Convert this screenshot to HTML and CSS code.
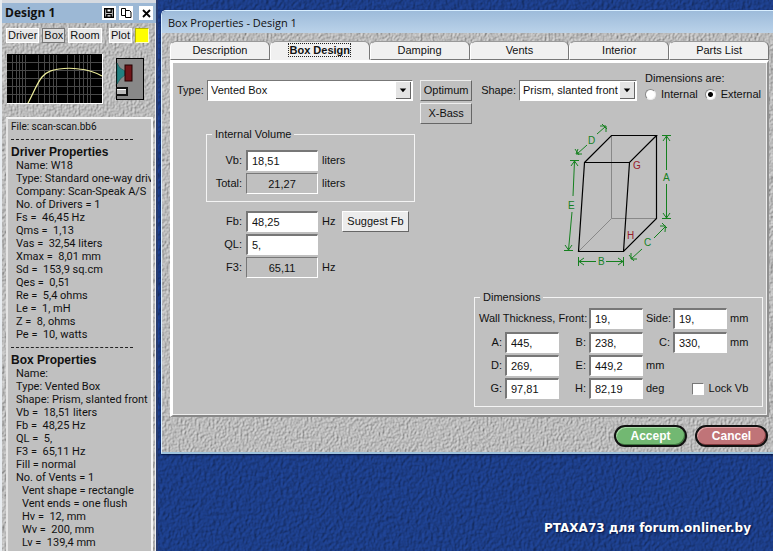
FILE: index.html
```html
<!DOCTYPE html>
<html lang="en">
<head>
<meta charset="utf-8">
<title>Box Properties - Design 1</title>
<link rel="stylesheet" href="styles.css">
</head>
<body>
<svg class="defs" aria-hidden="true">
  <filter id="stone" x="0" y="0" width="100%" height="100%" color-interpolation-filters="sRGB">
    <feTurbulence type="fractalNoise" baseFrequency="0.5 0.4" numOctaves="2" seed="4"/>
    <feDiffuseLighting lighting-color="#d2d2d2" surfaceScale="0.9" diffuseConstant="1.05"><feDistantLight azimuth="215" elevation="58"/></feDiffuseLighting>
  </filter>
  <filter id="water" x="0" y="0" width="100%" height="100%" color-interpolation-filters="sRGB">
    <feTurbulence type="fractalNoise" baseFrequency="0.34 0.28" numOctaves="2" seed="8"/>
    <feDiffuseLighting lighting-color="#1f4394" surfaceScale="0.9" diffuseConstant="1.08"><feDistantLight azimuth="215" elevation="58"/></feDiffuseLighting>
  </filter>
</svg>
<div class="desktop">
  <svg class="texture" aria-hidden="true"><rect width="100%" height="100%" filter="url(#water)"/></svg>

  <aside class="side">
    <header class="side-title">
      <h1>Design 1</h1>
      <button class="sys" aria-label="Save"><svg width="10" height="10" viewBox="0 0 10 10"><path d="M.7.7h8.6v8.6H.7zM2.8.7v3.6h4.4V.7M2.8 9.3V6.5h4.4v2.8" fill="none" stroke="#000" stroke-width="1.4"/></svg></button>
      <button class="sys" aria-label="Copy"><svg width="11" height="10" viewBox="0 0 11 10"><path d="M.5.5h4v7h-4zM4.500 2.500h4l1.500 1.500v5.500h-5.500z" fill="#fff" stroke="#000"/></svg></button>
      <button class="sys close" aria-label="Close"><svg width="9" height="9" viewBox="0 0 9 9"><path d="M1 1l7 7M8 1l-7 7" stroke="#000" stroke-width="1.800"/></svg></button>
    </header>
    <div class="side-body">
      <svg class="texture" aria-hidden="true"><rect width="100%" height="100%" filter="url(#stone)"/></svg>
      <nav class="side-tools">
        <button>Driver</button><button class="on">Box</button><button>Room</button><button class="plot">Plot</button><button class="swatch" aria-label="Plot colour"></button>
      </nav>
      <div class="previews">
        <svg class="graph" width="96" height="50" viewBox="0 0 96 50">
          <rect width="96" height="50" fill="#fff"/><rect width="95" height="49" fill="#000"/>
          <path d="M5.500 1v48M9.500 1v48M12.500 1v48M15.500 1v48M18.500 1v48M31.500 1v48M37.500 1v48M42.500 1v48M46.500 1v48M49.500 1v48M60.500 1v48M67.500 1v48M72.500 1v48M76.500 1v48M80.500 1v48M83.500 1v48M0 8.500h95M0 16.500h95M0 24.500h95M0 32.500h95M0 40.500h95" stroke="#484848" fill="none"/>
          <path d="M21 49C26 40 30 29 35 23C40 17 46 16 52 15Q62 13.500 72 15Q84 16 95 22" stroke="#eeee9c" stroke-width="1.200" fill="none"/>
        </svg>
        <svg class="speaker" width="28" height="42" viewBox="0 0 28 42">
          <rect x=".5" y=".5" width="27" height="41" fill="#888" stroke="#000"/>
          <path d="M1 5Q3 11 9 13v4Q4 20 1 26z" fill="#238080" stroke="#134b4b" stroke-width=".6"/>
          <rect x="9" y="7" width="7" height="16" fill="#701519" stroke="#200"/>
          <rect x="0" y="29" width="12" height="9" fill="#111"/><path d="M1 31h9v5H1z" fill="#bbb"/><path d="M1 31h9v1H1z" fill="#fff"/>
        </svg>
      </div>
      <section class="summary">
        <p class="file">File: scan-scan.bb6</p>
        <hr>
        <h2>Driver Properties</h2>
        <ul>
          <li>Name: W18</li><li>Type: Standard one-way driv</li><li>Company: Scan-Speak A/S</li><li>No. of Drivers = 1</li><li>Fs =&nbsp; 46,45 Hz</li><li>Qms =&nbsp; 1,13</li><li>Vas =&nbsp; 32,54 liters</li><li>Xmax =&nbsp; 8,01 mm</li><li>Sd =&nbsp; 153,9 sq.cm</li><li>Qes =&nbsp; 0,51</li><li>Re =&nbsp; 5,4 ohms</li><li>Le =&nbsp; 1, mH</li><li>Z =&nbsp; 8, ohms</li><li>Pe =&nbsp; 10, watts</li>
        </ul>
        <hr>
        <h2>Box Properties</h2>
        <ul>
          <li>Name:</li><li>Type: Vented Box</li><li>Shape: Prism, slanted front</li><li>Vb =&nbsp; 18,51 liters</li><li>Fb =&nbsp; 48,25 Hz</li><li>QL =&nbsp; 5,</li><li>F3 =&nbsp; 65,11 Hz</li><li>Fill = normal</li><li>No. of Vents = 1</li><li class="sub">Vent shape = rectangle</li><li class="sub">Vent ends = one flush</li><li class="sub">Hv =&nbsp; 12, mm</li><li class="sub">Wv =&nbsp; 200, mm</li><li class="sub">Lv =&nbsp; 139,4 mm</li>
        </ul>
      </section>
    </div>
  </aside>

  <main class="work">
    <section class="window">
      <header class="window-title"><h2>Box Properties - Design 1</h2></header>
      <div class="window-body">
        <svg class="texture" aria-hidden="true"><rect width="100%" height="100%" filter="url(#stone)"/></svg>
        <nav class="tabs">
          <button>Description</button><button class="active"><span>Box Design</span></button><button>Damping</button><button>Vents</button><button>Interior</button><button>Parts List</button>
        </nav>
        <form class="panel">
          <div class="top">
            <label for="type">Type:</label>
            <span class="combo type"><select id="type"><option>Vented Box</option></select><svg class="arrow" width="15" height="17" viewBox="0 0 15 17"><path d="M4 7h7L7.500 11z"/></svg></span>
            <div class="stack"><button type="button" class="btn">Optimum</button><button type="button" class="btn">X-Bass</button></div>
            <label for="shape">Shape:</label>
            <span class="combo shape"><select id="shape"><option>Prism, slanted front</option></select><svg class="arrow" width="15" height="17" viewBox="0 0 15 17"><path d="M4 7h7L7.500 11z"/></svg></span>
            <div class="dims-are" role="radiogroup" aria-labelledby="da">
              <span id="da">Dimensions are:</span>
              <div class="radios"><label><input type="radio" name="d">Internal</label><label><input type="radio" name="d" checked>External</label></div>
            </div>
          </div>
          <div class="lower">
            <div class="left">
              <fieldset class="volume">
                <legend>Internal Volume</legend>
                <div class="rows">
                  <label for="vb">Vb:</label><input id="vb" value="18,51"><span>liters</span>
                  <label for="total">Total:</label><input id="total" class="ro" readonly value="21,27"><span>liters</span>
                </div>
              </fieldset>
              <div class="rows tuning">
                <label for="fb">Fb:</label><input id="fb" value="48,25"><span>Hz</span><button type="button" class="btn light">Suggest Fb</button>
                <label for="ql">QL:</label><input id="ql" value="5,"><span></span><span></span>
                <label for="f3">F3:</label><input id="f3" class="ro" readonly value="65,11"><span>Hz</span>
              </div>
            </div>
            <div class="right">
              <svg class="prism" width="120" height="150" viewBox="560 120 120 150">
                <g fill="none" stroke="#888"><path d="M611.500 135.500v83h45M611.500 218.500L579 251"/></g>
                <g fill="none" stroke="#000" stroke-width="1.200"><path d="M656.500 135.500v83L623.500 251.500h-45L584.500 162.500h45L656.500 135.500h-45L584.500 162.500M629.500 162.500L623.500 251.500"/></g>
                <g fill="none" stroke="#15801f">
                  <path d="M662 135.500h9M662 218.500h9M666.500 136v34M666.500 184v34M663 141l3.500-5 3.500 5M663 213l3.500 5 3.500-5"/>
                  <path d="M578.500 257v9M623.500 257v9M579 261.500h17M606 261.500h17M584 258l-5 3.500 5 3.500M618 258l5 3.500-5 3.500"/>
                  <path d="M570 160.500h9M564 250.500h9M574.500 161L573 196M572 212L568.500 250M571 166l3.500-5 3.500 5M565 245l3.500 5 3.500-5"/>
                  <path d="M577 154L587 145M597 134L605 127M578 149l-2 5h6M600 126h6v6M602 124l5 5M575 149l4 6"/>
                  <path d="M631 259L642 249M654 238L665 227M631 253v6h6M660 226h5.500l-.5 6M662 223l5 5M629 255l5 6"/>
                </g>
                <g class="mark"><text x="663" y="181">A</text><text x="598" y="265">B</text><text x="644" y="246">C</text><text x="588" y="144">D</text><text x="568" y="209">E</text></g>
                <g class="angle"><text x="633" y="169">G</text><text x="627" y="239">H</text></g>
              </svg>
              <fieldset class="dimensions">
                <legend>Dimensions</legend>
                <div class="dim-grid">
                  <label class="wide" for="wf">Wall Thickness, Front:</label><input id="wf" value="19,"><label for="ws">Side:</label><input id="ws" value="19,"><span class="mm">mm</span>
                  <label for="a">A:</label><input id="a" value="445,"><label for="b">B:</label><input id="b" value="238,"><label for="c">C:</label><input id="c" value="330,"><span class="mm">mm</span>
                  <label for="dd">D:</label><input id="dd" value="269,"><label for="e">E:</label><input id="e" value="449,2"><span class="unit">mm</span>
                  <label for="g">G:</label><input id="g" value="97,81"><label for="h">H:</label><input id="h" value="82,19"><span class="unit short">deg</span><label class="lock"><input type="checkbox">Lock Vb</label>
                </div>
              </fieldset>
            </div>
          </div>
        </form>
        <footer class="actions"><button class="pill accept">Accept</button><button class="pill cancel">Cancel</button></footer>
      </div>
    </section>
    <p class="credit">PTAXA73 для forum.onliner.by</p>
  </main>
</div>
</body>
</html>
```

FILE: styles.css
```css
* { box-sizing: border-box; }
body { margin: 0; font: 11px/13px "Liberation Sans", Arial, sans-serif; color: #111; background: #1b3d8c; }
h1, h2, p, ul { margin: 0; padding: 0; }
button, input, select { font: inherit; color: inherit; margin: 0; }
.defs { position: absolute; width: 0; height: 0; }
.desktop { position: relative; isolation: isolate; display: flex; height: 100vh; overflow: hidden; }
.texture { position: absolute; inset: 0; width: 100%; height: 100%; z-index: -1; }

.side { flex: 0 0 158px; display: flex; flex-direction: column; padding-top: 3px; background: #d6dae0; border-left: 2px solid #e8ecf0; border-right: 2px solid #283c70; overflow: hidden; }
.side-title { display: flex; align-items: center; gap: 3px; height: 20px; padding: 0 3px; background: #9cb8d5; }
.side-title h1 { flex: 1; font: bold 12px/18px "Open Sans", sans-serif; }
.sys { display: grid; place-items: center; width: 14px; height: 14px; padding: 0; border: 0; background: #fff; }
.close { margin-left: 3px; }
.side-body { position: relative; isolation: isolate; flex: 1; min-height: 0; padding: 5px 2px 0 4px; border-right: 1px solid #eee; }
.side-tools { display: flex; gap: 3px; height: 15px; padding-right: 4px; }
.side-tools button { height: 15px; padding: 0 1px; border: 1px solid #fff; background: #e8e8e8; line-height: 13px; }
.side-tools .on { border: 1px solid #777; background: #ddd; }
.side-tools .plot { margin-left: auto; }
.side-tools .swatch { width: 14px; padding: 0; background: #ff0; border-color: #b4b400 #ffc #ffc #b4b400; }
.previews { display: flex; justify-content: space-between; align-items: center; padding: 11px 9px 13px 1px; }
.summary { height: 100%; padding: 1px 0 0 3px; background: #c0c0c0; border: 1px solid #888; border-top: 2px solid #f4f4f4; border-left: 2px solid #e4e4e4; border-right: 2px solid #f4f4f4; overflow: hidden; white-space: nowrap; font-family: Roboto, sans-serif; }
.file { font-size: 10px; }
.summary hr { height: 7px; width: 122px; margin: 0 0 6px; border: 0; border-bottom: 1px dashed #222; }
.summary h2 { font: bold 12px/13px "Liberation Sans", Arial, sans-serif; }
.summary ul { list-style: none; padding-left: 5px; }
.summary .sub { padding-left: 6px; }

.work { flex: 1; min-width: 0; padding: 10px 0 0 3px; display: flex; flex-direction: column; }
.window { border: 1px solid #d9efff; border-right: 0; border-bottom: 2px solid #9fc3dc; border-radius: 5px 0 0 0; overflow: hidden; box-shadow: 0 1px 2px #001040; }
.window-title { height: 22px; padding-left: 6px; background: linear-gradient(#9dbbda, #bad2e9); }
.window-title h2 { font: 11px/24px "Open Sans", sans-serif; }
.window-body { position: relative; isolation: isolate; padding: 8px 4px 0 8px; }
.tabs { display: grid; grid-template-columns: repeat(6, 1fr); }
.tabs button { height: 19px; padding: 0; border: 1px solid #777; border-left-color: #fff; border-top-color: #999; border-radius: 6px 6px 0 0; background: #f0f0f0; line-height: 17px; }
.tabs .active { border-bottom-color: #f0f0f0; font-weight: bold; }
.tabs .active span { outline: 1px dotted #222; }

.panel { padding: 17px 2px 8px 4px; background: #c0c0c0; border-style: solid; border-width: 3px 2px 2px 3px; border-color: #fff #909090 #888 #fff; box-shadow: inset -1px -1px #eee; }
.top { display: flex; align-items: flex-start; height: 43px; }
.top > label { line-height: 21px; }
.combo { position: relative; display: flex; height: 21px; margin-left: 3px; border: 1px solid #777; border-right-color: #fff; border-bottom-color: #fff; background: #fff; }
.combo select { width: 100%; padding: 0 18px 0 3px; border: 0; background: #fff; appearance: none; }
.arrow { position: absolute; right: 1px; top: 1px; background: #e4e4e4; border-right: 1px solid #666; border-bottom: 1px solid #666; pointer-events: none; }
.type { flex: 1; }
.shape { width: 118px; }
.stack { display: grid; gap: 2px; width: 52px; margin: 0 9px 0 7px; }
.btn { height: 21px; padding: 0; background: #c0c0c0; border: 1px solid #eee; border-right-color: #666; border-bottom-color: #666; }
.light { background: #ececec; border-left-color: #fff; border-top-color: #fff; }
.dims-are { width: 120px; margin: -8px 0 0 8px; }
.radios { display: flex; justify-content: space-between; padding: 3px 4px 0 0; }
.radios label { display: flex; align-items: center; gap: 5px; }
input[type="radio"] { appearance: none; width: 11px; height: 11px; border: 1px solid #888; border-right-color: #eee; border-bottom-color: #eee; border-radius: 50%; background: #fff; }
input[type="radio"]:checked { background: radial-gradient(circle, #000 2px, #fff 3px); }

.lower { display: flex; justify-content: space-between; padding-right: 6px; }
.left { padding: 5px 0 0 29px; }
fieldset { margin: 0; padding: 0; border: 1px solid #f4f4f4; }
legend { padding: 0 3px; margin-left: 5px; line-height: 13px; }
.volume { width: 209px; height: 74px; padding-top: 9px; }
.rows { display: grid; grid-template-columns: 35px 72px auto; grid-auto-rows: 21px; gap: 2px 4px; align-items: center; justify-content: start; }
.rows label, .dim-grid label { text-align: right; white-space: nowrap; }
.tuning { grid-template-columns: 36px 72px 16px 67px; padding-top: 9px; }
.rows input, .dim-grid input { width: 100%; height: 21px; padding: 0 4px; border: 1px solid #fff; border-left: 2px solid #777; border-top: 2px solid #777; background: #fff; }
.rows .ro { background: #c0c0c0; text-align: center; border-left-width: 1px; border-top-width: 1px; }
.right { display: flex; flex-direction: column; width: 285px; }
.prism { margin: -3px 0 0 86px; }
.prism text { font-size: 10px; }
.mark { fill: #15801f; }
.angle { fill: #991c2c; }
.dimensions { height: 116px; margin-top: 21px; padding: 3px 14px 0 4px; }
.dimensions legend { margin-left: 1px; }
.dim-grid { display: grid; grid-template-columns: 23px 54px 24px 54px 24px 54px 1fr; grid-template-rows: 23px; grid-auto-rows: 21px; gap: 2px 3px; align-items: center; }
.dim-grid .wide { grid-column: 1 / 4; }
.mm { text-align: right; }
.dim-grid .unit { grid-column: 5 / 8; }
.dim-grid .short { grid-column: 5; }
.dim-grid .lock { grid-column: 6 / 8; display: flex; align-items: center; justify-content: flex-end; gap: 5px; }
.dim-grid .lock input { width: 12px; height: 12px; padding: 0; border-width: 1px; appearance: none; }
.dim-grid .lock input:checked { background: #222; }

.actions { display: flex; justify-content: flex-end; gap: 8px; padding: 8px 1px 5px; }
.pill { width: 73px; height: 22px; padding: 0; border: 2px solid #111; border-radius: 11px; font-weight: bold; font-size: 12px; line-height: 18px; color: #fff; }
.accept { background: #72b872; box-shadow: inset 1px 1px #a9dba9, inset -1px -1px #3e7840; }
.cancel { background: #c07478; box-shadow: inset 1px 1px #e0a5a8, inset -1px -1px #80383c; }
.credit { margin: auto 22px 14px auto; font: bold 12px/18px "DejaVu Sans", sans-serif; color: #fff; text-shadow: 1px 1px 2px #001040; }
```
